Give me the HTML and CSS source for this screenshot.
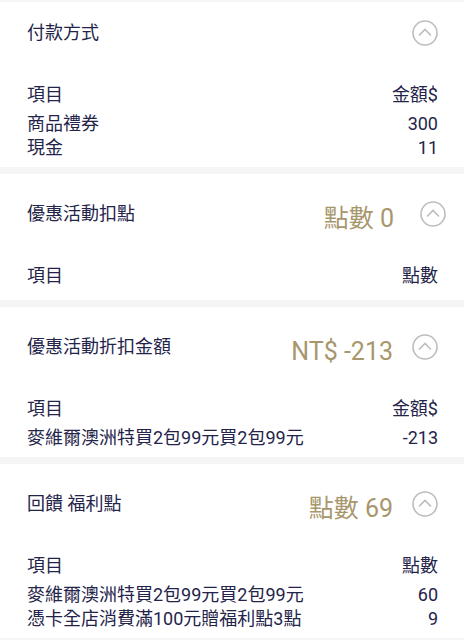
FILE: index.html
```html
<!DOCTYPE html>
<html>
<head>
    <meta charset='utf-8'>
    <title>付款明細</title>
    <meta name='viewport' content='width=device-width, initial-scale=1'>
    <link rel="stylesheet" href="styles.css">
</head>
<body>
    <div class="section section-first">
        <div class="head">
            <div class="title">付款方式</div>
            <svg class="toggle" viewBox="0 0 26 26"><circle cx="13" cy="13" r="12"/><path d="M7 15.5 L13 9.5 L19 15.5"/></svg>
        </div>
        <div class="table">
            <div class="row row-head"><span>項目</span><span>金額$</span></div>
            <div class="row"><span>商品禮券</span><span>300</span></div>
            <div class="row"><span>現金</span><span>11</span></div>
        </div>
    </div>

    <div class="section">
        <div class="head">
            <div class="title">優惠活動扣點</div>
            <div class="value">點數 0</div>
            <svg class="toggle toggle-wide" viewBox="0 0 26 26"><circle cx="13" cy="13" r="12"/><path d="M7 15.5 L13 9.5 L19 15.5"/></svg>
        </div>
        <div class="table">
            <div class="row row-head"><span>項目</span><span>點數</span></div>
        </div>
    </div>

    <div class="section">
        <div class="head">
            <div class="title">優惠活動折扣金額</div>
            <div class="value">NT$ -213</div>
            <svg class="toggle" viewBox="0 0 26 26"><circle cx="13" cy="13" r="12"/><path d="M7 15.5 L13 9.5 L19 15.5"/></svg>
        </div>
        <div class="table">
            <div class="row row-head"><span>項目</span><span>金額$</span></div>
            <div class="row"><span>麥維爾澳洲特買2包99元買2包99元</span><span>-213</span></div>
        </div>
    </div>

    <div class="section">
        <div class="head">
            <div class="title">回饋 福利點</div>
            <div class="value">點數 69</div>
            <svg class="toggle" viewBox="0 0 26 26"><circle cx="13" cy="13" r="12"/><path d="M7 15.5 L13 9.5 L19 15.5"/></svg>
        </div>
        <div class="table">
            <div class="row row-head"><span>項目</span><span>點數</span></div>
            <div class="row"><span>麥維爾澳洲特買2包99元買2包99元</span><span>60</span></div>
            <div class="row"><span>憑卡全店消費滿100元贈福利點3點</span><span>9</span></div>
        </div>
    </div>
</body>
</html>
```

FILE: styles.css
```css
* {
    margin: 0;
    padding: 0;
    box-sizing: border-box;
}
body {
    font-family: Roboto, "Noto Sans CJK TC", sans-serif;
    font-size: 18px;
    color: #24244a;
    background: #f5f5f5;
    padding-top: 2px;
}

.section {
    background: #fff;
    padding: 27px 26px 7px 27px;
    margin-bottom: 7px;
}

.section-first {
    padding-top: 18px;
}

.head {
    display: flex;
    align-items: center;
    height: 26px;
}

.title {
    flex: 1;
    line-height: 24px;
}

.value {
    color: #a8966c;
    font-size: 25px;
    line-height: 30px;
    margin-top: 10px;
}

.toggle {
    width: 26px;
    height: 26px;
    margin-left: 19px;
    fill: none;
    stroke: #bdbdbd;
    stroke-width: 1.6;
}

.toggle-wide {
    margin-left: 26px;
    margin-right: -8px;
}

.table {
    margin-top: 37px;
}

.row {
    display: flex;
    justify-content: space-between;
    line-height: 24px;
}

.row-head {
    margin-bottom: 5px;
}
```
